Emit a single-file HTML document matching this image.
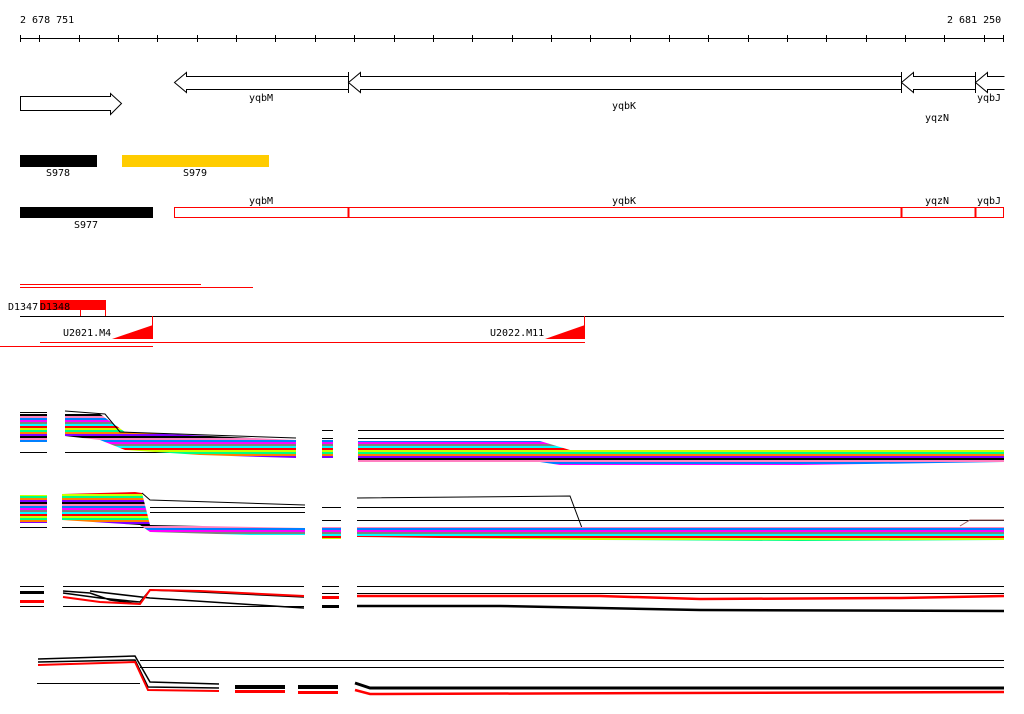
<!DOCTYPE html>
<html><head><style>body{margin:0;background:#fff}svg{display:block}text{font-family:"DejaVu Sans Mono","Liberation Mono",monospace;font-size:10px;fill:#000}</style></head>
<body>
<svg width="1024" height="714" viewBox="0 0 1024 714" shape-rendering="crispEdges">
<defs>
<pattern id="st" width="10" height="22" patternUnits="userSpaceOnUse">
<rect y="0" width="10" height="2" fill="#0080ff"/><rect y="2" width="10" height="2" fill="#ff00ff"/><rect y="4" width="10" height="2" fill="#808080"/><rect y="6" width="10" height="2" fill="#00ffff"/><rect y="8" width="10" height="2" fill="#ff0000"/><rect y="10" width="10" height="2" fill="#ccff00"/><rect y="12" width="10" height="2" fill="#00ff80"/><rect y="14" width="10" height="2" fill="#ff8000"/><rect y="16" width="10" height="2" fill="#8000ff"/><rect y="18" width="10" height="2" fill="#000"/><rect y="20" width="10" height="2" fill="#ff80c0"/>
</pattern>
</defs>
<text x="20" y="23">2 678 751</text><text x="947" y="23">2 681 250</text>
<line x1="20" y1="38.5" x2="1004" y2="38.5" stroke="#000"/>
<g stroke="#000">
<path d="M20.5 35v7M39.5 35v7M79.5 35v7M118.5 35v7M157.5 35v7M197.5 35v7M236.5 35v7M275.5 35v7M315.5 35v7M354.5 35v7M394.5 35v7M433.5 35v7M472.5 35v7M512.5 35v7M551.5 35v7M590.5 35v7M630.5 35v7M669.5 35v7M708.5 35v7M748.5 35v7M787.5 35v7M826.5 35v7M866.5 35v7M905.5 35v7M944.5 35v7M984.5 35v7M1003.5 35v7"/>
</g>
<g fill="#fff" stroke="#000" shape-rendering="auto">
<path d="M20.5 96.5H110.5V93.5L121.5 103.5L110.5 114.5V110.5H20.5Z"/>
<path d="M348.5 76.5H186.5V72.5L174.5 82.5L186.5 92.5V89.5H348.5Z"/>
<path d="M901.5 76.5H360.5V72.5L348.5 82.5L360.5 92.5V89.5H901.5Z"/>
<path d="M975.5 76.5H913.5V72.5L901.5 82.5L913.5 92.5V89.5H975.5Z"/>
<path d="M1004.5 76.5H987.5V72.5L975.5 82.5L987.5 92.5V89.5H1004.5"/>
</g>
<path d="M348.5 72v21M901.5 72v21M975.5 72v21" stroke="#000"/>
<text x="249" y="101">yqbM</text><text x="612" y="109">yqbK</text><text x="925" y="121">yqzN</text><text x="977" y="101">yqbJ</text>
<rect x="20" y="155" width="77" height="12" fill="#000"/><rect x="122" y="155" width="147" height="12" fill="#ffcc00"/>
<text x="46" y="176">S978</text><text x="183" y="176">S979</text>
<rect x="20" y="207" width="133" height="11" fill="#000"/><text x="74" y="228">S977</text>
<rect x="174.5" y="207.5" width="829" height="10" fill="none" stroke="#f00"/>
<path d="M348.5 207v11M901.5 207v11M975.5 207v11" stroke="#f00" stroke-width="2"/>
<text x="249" y="204">yqbM</text><text x="612" y="204">yqbK</text><text x="925" y="204">yqzN</text><text x="977" y="204">yqbJ</text>
<path d="M20 284.5H201M20 287.5H253" stroke="#f00"/>
<rect x="40" y="300" width="66" height="10" fill="#f00"/>
<text x="8" y="310">D1347</text><text x="40" y="310">D1348</text>
<path d="M80.5 310v6M105.5 310v6" stroke="#f00"/>
<line x1="20" y1="316.5" x2="1004" y2="316.5" stroke="#000"/>
<text x="63" y="336">U2021.M4</text><text x="490" y="336">U2022.M11</text>
<path d="M112 339L153 325V339ZM545 339L585 325V339Z" fill="#f00" shape-rendering="auto"/>
<path d="M152.5 316v23M584.5 316v23M40 342.5H585M0 346.5H153" stroke="#f00"/>
<!-- group 1 -->
<g stroke="#000">
<path d="M20 452.5H47M65 452.5H296M322 452.5H333M358 430.5H1004M358 438.5H1004M322 430.5H333M322 438.5H333M20 412.5H47"/>
</g>
<rect x="20" y="414" width="27" height="28" fill="url(#st)"/>
<path d="M65 414L100 414L125 432L296 440L296 458L200 455L125 450L100 440L65 436Z" fill="url(#st)" shape-rendering="auto"/>
<path d="M65 411L105 414L120 432L296 438" fill="none" stroke="#000" shape-rendering="auto"/>
<rect x="322" y="440" width="11" height="18" fill="url(#st)"/>
<path d="M358 441H540L570 450H1004V462L800 465H560L540 462H358Z" fill="url(#st)" shape-rendering="auto"/>
<!-- group 2 -->
<path d="M20 527.5H47M62 527.5H150M322 507.5H341M322 520.5H341M357 507.5H1004M357 520.5H1004M150 507.5H305M150 512.5H305" stroke="#000"/>
<rect x="20" y="495" width="27" height="28" fill="url(#st)"/>
<path d="M62 494L135 492L142 493L150 525L305 528V535L250 535L150 532L140 525L62 520Z" fill="url(#st)" shape-rendering="auto"/>
<path d="M142 493L150 500L305 505M357 498L570 496L582 528L1004 528" fill="none" stroke="#000" shape-rendering="auto"/>
<rect x="322" y="527" width="19" height="12" fill="url(#st)"/>
<path d="M357 527H1004V540L800 541L600 540L357 537Z" fill="url(#st)" shape-rendering="auto"/>
<path d="M960 526L970 520H1004" fill="none" stroke="#a06060" shape-rendering="auto"/>
<!-- group 3 -->
<g stroke="#000"><path d="M20 586.5H44M63 586.5H304M322 586.5H339M357 586.5H1004M357 593.5H1004M322 593.5H339M20 606.5H44M63 606.5H304"/></g>
<rect x="20" y="591" width="24" height="3" fill="#000"/><rect x="20" y="600" width="24" height="3" fill="#f00"/>
<path d="M63 591L90 593L110 600L140 604M63 593L100 598L140 602L150 590L200 592L304 597M90 591L150 598L304 608" fill="none" stroke="#000" stroke-width="1.5" shape-rendering="auto"/>
<path d="M63 597L100 602L140 604L150 590L200 591L304 596" fill="none" stroke="#f00" stroke-width="2" shape-rendering="auto"/>
<rect x="322" y="596" width="17" height="3" fill="#f00"/><rect x="322" y="605" width="17" height="3" fill="#000"/>
<path d="M357 596H600L700 599L900 598L1004 596" fill="none" stroke="#f00" stroke-width="2.5" shape-rendering="auto"/>
<path d="M357 606H500L700 610L1004 611" fill="none" stroke="#000" stroke-width="2.5" shape-rendering="auto"/>
<!-- group 4 -->
<g stroke="#000"><path d="M37 683.5H140M140 660.5H1004M140 667.5H1004M235 660.5H285M235 667.5H285"/></g>
<path d="M38 659L135 656L150 682L219 684M38 662L135 660L148 687L219 688" fill="none" stroke="#000" stroke-width="1.5" shape-rendering="auto"/>
<path d="M38 665L135 662L148 690L219 691" fill="none" stroke="#f00" stroke-width="2" shape-rendering="auto"/>
<rect x="235" y="685" width="50" height="4" fill="#000"/><rect x="235" y="690" width="50" height="3" fill="#f00"/>
<rect x="298" y="685" width="40" height="4" fill="#000"/><rect x="298" y="691" width="40" height="3" fill="#f00"/>
<path d="M355 683L370 688H1004" fill="none" stroke="#000" stroke-width="3" shape-rendering="auto"/>
<path d="M355 690L370 694L1004 692" fill="none" stroke="#f00" stroke-width="2.5" shape-rendering="auto"/>
</svg>
</body></html>
